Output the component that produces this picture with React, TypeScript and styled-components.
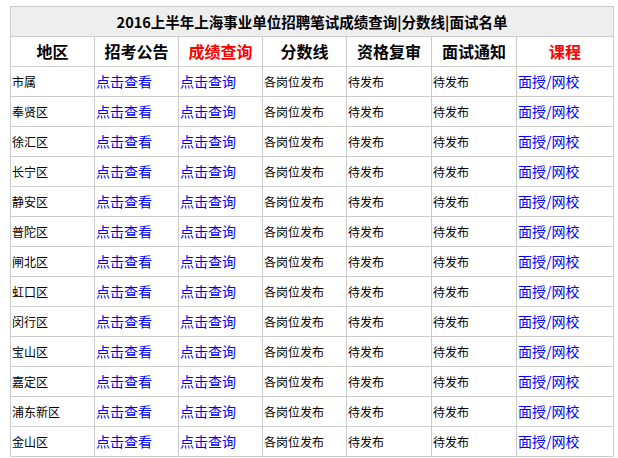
import React from "react";
import styled, { createGlobalStyle } from "styled-components";

const Global = createGlobalStyle`
  html, body { margin: 0; padding: 0; background: #fff; }
  body { font-family: "Noto Sans CJK SC", "Liberation Sans", sans-serif; }
`;

const Page = styled.div`
  padding: 6px 0 0 10px;
`;

const Table = styled.table`
  border-collapse: collapse;
  table-layout: fixed;
  width: 603px;
  font-family: "Noto Sans CJK SC", sans-serif;
`;

const Col = styled.col<{ $w: number }>`
  width: ${(p) => p.$w}px;
`;

const TitleCell = styled.th`
  height: 29px;
  padding: 0;
  background: #eeeeee;
  border: 1px solid #cccccc;
  font-size: 14.5px;
  font-weight: bold;
  color: #000;
  text-align: center;
  line-height: 29px;
  white-space: nowrap;
`;

const HeadCell = styled.th<{ $red?: boolean }>`
  height: 29px;
  padding: 0;
  border: 1px solid #cccccc;
  font-size: 16px;
  font-weight: bold;
  color: ${(p) => (p.$red ? "#ff0000" : "#000")};
  text-align: center;
  line-height: 29px;
`;

const Cell = styled.td`
  height: 29px;
  padding: 0 0 0 1px;
  border: 1px solid #cccccc;
  font-size: 12px;
  color: #000;
  text-align: left;
  line-height: 29px;
  white-space: nowrap;
`;

const Link = styled.a`
  color: #0000ff;
  font-size: 14px;
  text-decoration: none;
  cursor: pointer;
`;

const districts = [
  "市属", "奉贤区", "徐汇区", "长宁区", "静安区", "普陀区", "闸北区",
  "虹口区", "闵行区", "宝山区", "嘉定区", "浦东新区", "金山区",
];

const widths = [84, 84, 84, 84, 85, 85, 97];
const heads: { t: string; red?: boolean }[] = [
  { t: "地区" }, { t: "招考公告" }, { t: "成绩查询", red: true }, { t: "分数线" },
  { t: "资格复审" }, { t: "面试通知" }, { t: "课程", red: true },
];

export default function App() {
  return (
    <Page>
      <Global />
      <Table>
        <colgroup>
          {widths.map((w, i) => <Col key={i} $w={w} />)}
        </colgroup>
        <thead>
          <tr>
            <TitleCell colSpan={7}>2016上半年上海事业单位招聘笔试成绩查询|分数线|面试名单</TitleCell>
          </tr>
          <tr>
            {heads.map((h) => <HeadCell key={h.t} $red={h.red}>{h.t}</HeadCell>)}
          </tr>
        </thead>
        <tbody>
          {districts.map((d) => (
            <tr key={d}>
              <Cell>{d}</Cell>
              <Cell><Link>点击查看</Link></Cell>
              <Cell><Link>点击查询</Link></Cell>
              <Cell>各岗位发布</Cell>
              <Cell>待发布</Cell>
              <Cell>待发布</Cell>
              <Cell><Link>面授/网校</Link></Cell>
            </tr>
          ))}
        </tbody>
      </Table>
    </Page>
  );
}
